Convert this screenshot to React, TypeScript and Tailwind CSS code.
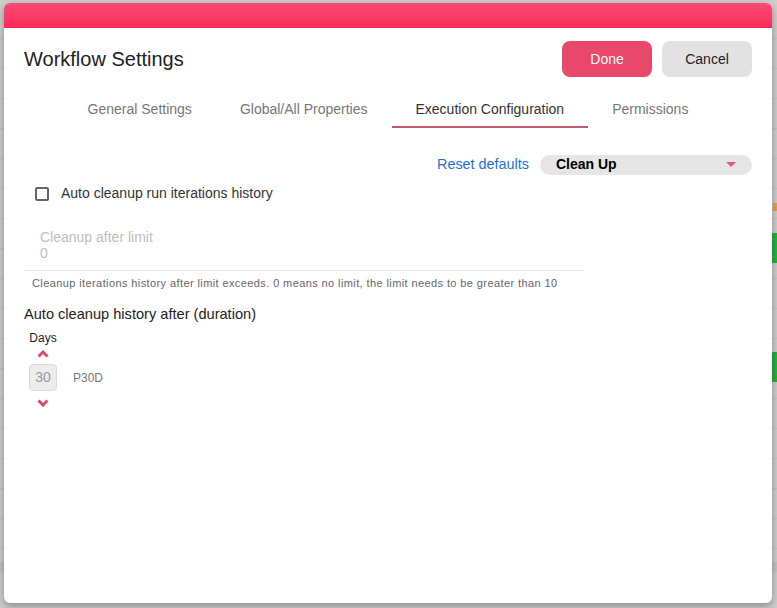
import React from "react";

function ChevronUp() {
  return (
    <svg width="12" height="8" viewBox="0 0 12 8" fill="none">
      <path d="M1.5 6.5 L6 2 L10.5 6.5" stroke="#e0466a" strokeWidth="3" strokeLinecap="butt" strokeLinejoin="miter" />
    </svg>
  );
}
function ChevronDown() {
  return (
    <svg width="12" height="8" viewBox="0 0 12 8" fill="none">
      <path d="M1.5 1.5 L6 6 L10.5 1.5" stroke="#e0466a" strokeWidth="3" strokeLinecap="butt" strokeLinejoin="miter" />
    </svg>
  );
}

export default function App() {
  const tabs = ["General Settings", "Global/All Properties", "Execution Configuration", "Permissions"];
  const lines = [38, 68, 98, 128, 158, 188, 218, 248, 278, 308, 338, 368, 398, 428, 458, 488, 518, 548];
  return (
    <div
      className="relative w-[777px] h-[608px] overflow-hidden bg-[#cfcfcf]"
      style={{ fontFamily: '"Liberation Sans", Arial, sans-serif' }}
    >
      {/* dimmed app underneath */}
      <div className="absolute inset-0">
        {lines.map((y) => (
          <div key={y} className="absolute left-0 right-0 h-px bg-[#c2c2c2]" style={{ top: y }} />
        ))}
        <div className="absolute left-0 right-0 top-[562px] h-[10px] bg-[#c4c4c4]" />
        <div className="absolute right-0 top-[233px] w-[6px] h-[30px] bg-[#22b53a] rounded-l-[3px]" />
        <div className="absolute right-0 top-[352px] w-[6px] h-[30px] bg-[#22b53a] rounded-l-[3px]" />
        <div className="absolute right-0 top-[203px] w-[4px] h-[8px] bg-[#e8a53a]" />
      </div>

      <div className="relative ml-[4px] mt-[3px] w-[768px] h-[600px] bg-white rounded-[6px] overflow-hidden shadow-[0_3px_8px_rgba(0,0,0,0.35)] flex flex-col">
        <div className="h-[25px] bg-gradient-to-b from-[#fb4a72] to-[#f7285a]" />
        <div className="px-[20px] flex flex-col">
          <div className="mt-[13px] flex items-center justify-between h-[36px]">
            <div className="text-[20px] text-[#222]">Workflow Settings</div>
            <div className="flex gap-[10px]">
              <button className="w-[90px] h-[36px] rounded-[8px] bg-[#e8496a] text-white text-[14px]">Done</button>
              <button className="w-[90px] h-[36px] rounded-[8px] bg-[#e2e2e2] text-[#222] text-[14px]">Cancel</button>
            </div>
          </div>

          <div className="mt-[13px] flex justify-center">
            {tabs.map((t, i) => (
              <div
                key={t}
                className={
                  i === 2
                    ? "h-[38px] pt-[2px] px-[24px] flex items-center text-[14px] text-[#333] border-b-2 border-[#c9566f]"
                    : "h-[38px] pt-[2px] px-[24px] flex items-center text-[14px] text-[#777] border-b-2 border-transparent"
                }
              >
                {t}
              </div>
            ))}
          </div>

          <div className="mt-[26px] flex justify-end items-center gap-[11px]">
            <span className="text-[14.4px] text-[#1f6fd6]">Reset defaults</span>
            <div className="w-[212px] h-[20px] rounded-full bg-[#e6e6e6] flex items-center justify-between pl-[16px] pr-[16px]">
              <span className="text-[14px] font-bold text-black">Clean Up</span>
              <svg width="10" height="6" viewBox="0 0 10 6">
                <path d="M0 0 L10 0 L5 5 Z" fill="#e8557a" />
              </svg>
            </div>
          </div>

          <div className="mt-[11px] flex items-center h-[14px]">
            <div className="ml-[11px] w-[14px] h-[14px] border-2 border-[#666] rounded-[2px]" />
            <span className="ml-[12px] text-[14px] text-[#333]">Auto cleanup run iterations history</span>
          </div>

          <div className="mt-[28px] w-[560px] border-b border-[#e8e8e8] pb-[9px]">
            <div className="ml-[16px] text-[14px] leading-[16px] text-[#bdbdbd]">Cleanup after limit</div>
            <div className="ml-[16px] text-[14px] leading-[16px] text-[#bdbdbd]">0</div>
          </div>
          <div className="mt-[6px] ml-[8px] text-[11px] leading-[13px] tracking-[0.4px] text-[#666]">
            Cleanup iterations history after limit exceeds. 0 means no limit, the limit needs to be greater than 10
          </div>

          <div className="mt-[16px] text-[14.6px] leading-[16px] text-[#222]">Auto cleanup history after (duration)</div>
          <div className="mt-[9px] ml-[5px] flex flex-col">
            <div className="w-[28px] text-center text-[12px] leading-[14px] text-[#222]">Days</div>
            <div className="mt-[5px] w-[28px] flex justify-center"><ChevronUp /></div>
            <div className="mt-[6px] flex items-center">
              <div className="w-[28px] h-[27px] bg-[#ececec] border border-[#dcdcdc] rounded-[4px] flex items-center justify-center text-[14px] text-[#999]">30</div>
              <div className="ml-[16px] mt-[1px] text-[12px] text-[#777]">P30D</div>
            </div>
            <div className="mt-[8px] w-[28px] flex justify-center"><ChevronDown /></div>
          </div>
        </div>
      </div>
    </div>
  );
}
